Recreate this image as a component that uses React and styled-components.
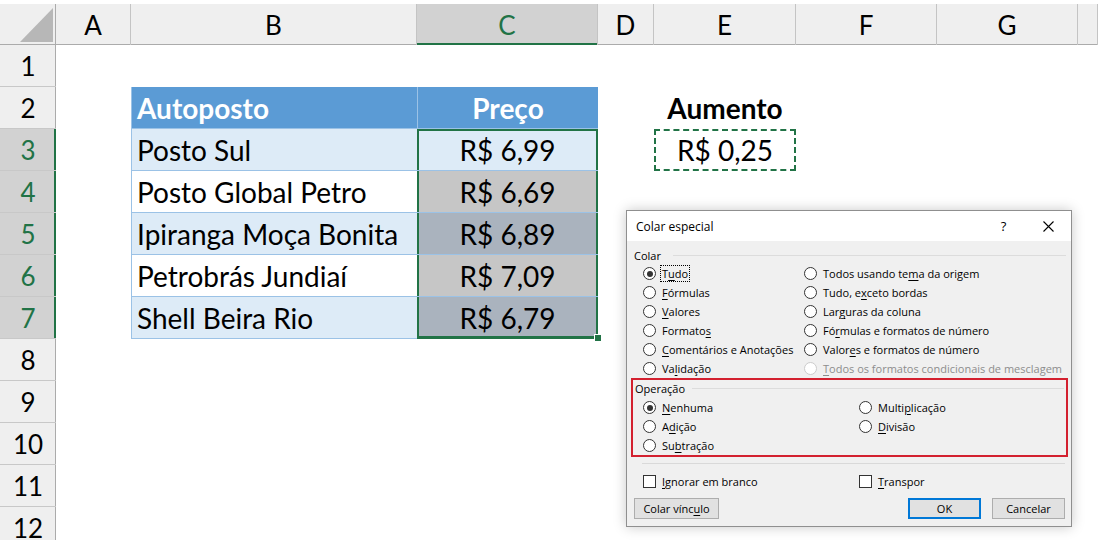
import React from "react";
import styled, { createGlobalStyle, css } from "styled-components";

const GREEN = "#217346";
const BAND = "#ddebf7";
const TABLE_LINE = "#9bc2e6";

const GlobalStyle = createGlobalStyle`
  html, body {
    margin: 0;
    padding: 0;
    background: #fff;
    overflow: hidden;
  }
  body {
    font-family: "Lato", "Liberation Sans", sans-serif;
  }
`;

const Screen = styled.div`
  position: relative;
  width: 1098px;
  height: 540px;
  overflow: hidden;
  background: #fff;
`;

const Sheet = styled.div`
  display: grid;
  grid-template-columns: 56px 75px 286px 181px 56px 142px 141px 141px 1fr;
  grid-template-rows: 41px;
  grid-auto-rows: 42px;
  padding-top: 4px;
  font-family: "Lato", "Liberation Sans", sans-serif;
  color: #000;
`;

const Corner = styled.div`
  position: relative;
  background: #efefef;
  box-shadow: inset -1px -1px 0 #ababab;
  &::after {
    content: "";
    position: absolute;
    right: 3px;
    bottom: 3px;
    width: 33px;
    height: 34px;
    background: #b7b7b7;
    clip-path: polygon(100% 0, 100% 100%, 0 100%);
  }
`;

const ColHead = styled.div`
  display: flex;
  align-items: center;
  justify-content: center;
  box-sizing: border-box;
  font-size: 26px;
  background: ${({ $selected }) => ($selected ? "#d2d2d2" : "#efefef")};
  color: ${({ $selected }) => ($selected ? GREEN : "#000")};
  border-right: 1px solid #c4c4c4;
  box-shadow: ${({ $selected }) =>
    $selected ? `inset 0 -2px 0 ${GREEN}` : "inset 0 -1px 0 #ababab"};
`;

const RowHead = styled.div`
  display: flex;
  align-items: center;
  justify-content: center;
  box-sizing: border-box;
  font-size: 26px;
  background: ${({ $selected }) => ($selected ? "#d2d2d2" : "#efefef")};
  color: ${({ $selected }) => ($selected ? GREEN : "#000")};
  border-bottom: 1px solid #c8c8c8;
  box-shadow: ${({ $selected }) =>
    $selected ? `inset -2px 0 0 ${GREEN}` : "inset -1px 0 0 #ababab"};
`;

const Blank = styled.div``;

const TableHead = styled.div`
  display: flex;
  align-items: center;
  justify-content: ${({ $center }) => ($center ? "center" : "flex-start")};
  box-sizing: border-box;
  padding-left: ${({ $center }) => ($center ? "0" : "5px")};
  background: #5b9bd5;
  color: #fff;
  font-weight: 700;
  font-size: 28px;
  border-left: 1px solid ${TABLE_LINE};
  border-bottom: 1px solid ${TABLE_LINE};
`;

const NameCell = styled.div`
  display: flex;
  align-items: center;
  box-sizing: border-box;
  padding-left: 5px;
  font-size: 28px;
  background: ${({ $band }) => ($band ? BAND : "#fff")};
  border-left: 1px solid ${TABLE_LINE};
  border-bottom: 1px solid ${TABLE_LINE};
  white-space: nowrap;
`;

const shades = {
  active: BAND,
  gray: "#c6c6c6",
  blue: "#aab3be",
};

const PriceCell = styled.div`
  position: relative;
  display: flex;
  align-items: center;
  justify-content: center;
  box-sizing: border-box;
  font-size: 28px;
  background: ${({ $shade }) => shades[$shade]};
  border-bottom: 1px solid ${TABLE_LINE};
  box-shadow: inset 2px 0 0 ${GREEN}, inset -2px 0 0 ${GREEN}
    ${({ $top }) => ($top ? `, inset 0 2px 0 ${GREEN}` : "")}
    ${({ $bottom }) => ($bottom ? `, inset 0 -2px 0 ${GREEN}` : "")};
  ${({ $bottom }) =>
    $bottom &&
    css`
      border-bottom-color: ${GREEN};
    `}
`;

const FillHandle = styled.span`
  position: absolute;
  right: -4px;
  bottom: -4px;
  width: 6px;
  height: 6px;
  background: ${GREEN};
  border: 1px solid #fff;
  z-index: 2;
`;

const LabelCell = styled.div`
  display: flex;
  align-items: center;
  justify-content: center;
  font-size: 28px;
  font-weight: 700;
`;

const CopiedCell = styled.div`
  display: flex;
  align-items: center;
  justify-content: center;
  box-sizing: border-box;
  font-size: 28px;
  border: 2px dashed ${GREEN};
`;

/* ---------- dialog ---------- */

const Dialog = styled.div`
  position: absolute;
  left: 626px;
  top: 210px;
  width: 446px;
  height: 317px;
  box-sizing: border-box;
  display: flex;
  flex-direction: column;
  background: #f0f0f0;
  border: 1px solid #8f8f8f;
  box-shadow: 0 0 12px rgba(0, 0, 0, 0.22);
  font-family: "Open Sans", "Noto Sans", sans-serif;
  font-size: 11px;
  color: #000;
`;

const TitleBar = styled.div`
  display: flex;
  align-items: center;
  height: 30px;
  padding-left: 9px;
  background: #fff;
  font-size: 12px;
`;

const TitleText = styled.span`
  flex: 1;
`;

const TitleButton = styled.span`
  width: 45px;
  height: 30px;
  display: flex;
  align-items: center;
  justify-content: center;
  font-size: 13px;
`;

const Body = styled.div`
  padding: 7px 3px 0 4px;
`;

const Legend = styled.div`
  display: flex;
  align-items: center;
  height: 14px;
  padding-left: ${({ $indent }) => $indent}px;
  margin-right: 2px;
  &::after {
    content: "";
    flex: 1;
    height: 1px;
    margin-left: ${({ $gap }) => $gap}px;
    background: #dcdcdc;
  }
`;

const OptionGrid = styled.div`
  display: grid;
  grid-template-columns: ${({ $col }) => $col}px 1fr;
  grid-auto-rows: 19px;
  padding-left: ${({ $indent }) => $indent}px;
  margin-top: ${({ $top }) => $top}px;
`;

const Option = styled.div`
  display: flex;
  align-items: center;
  gap: 6px;
  white-space: nowrap;
  color: ${({ $disabled }) => ($disabled ? "#8d8d8d" : "#000")};
`;

const Radio = styled.span`
  width: 13px;
  height: 13px;
  box-sizing: border-box;
  flex: none;
  display: flex;
  align-items: center;
  justify-content: center;
  border-radius: 50%;
  background: #fff;
  border: 1px solid ${({ $disabled }) => ($disabled ? "#cccccc" : "#333")};
  &::after {
    content: "";
    width: 6px;
    height: 6px;
    border-radius: 50%;
    background: ${({ $checked }) => ($checked ? "#333" : "transparent")};
  }
`;

const Checkbox = styled.span`
  width: 13px;
  height: 13px;
  box-sizing: border-box;
  flex: none;
  background: #fff;
  border: 1px solid #333;
`;

const Focus = styled.span`
  outline: 1px dotted #000;
  outline-offset: 0;
  padding: 0 1px;
  margin-left: -1px;
`;

const Key = styled.u`
  text-decoration: underline;
  text-underline-offset: 2px;
`;

const OperationBox = styled.div`
  border: 2px solid #d3202f;
  padding-top: 1px;
`;

const Separator = styled.div`
  height: 1px;
  margin: 6px 3px 0 11px;
  background: #d9d9d9;
`;

const ButtonRow = styled.div`
  display: flex;
  gap: 11px;
  height: 21px;
  margin-top: 7px;
  padding: 0 3px;
`;

const Button = styled.button`
  width: ${({ $w }) => $w}px;
  height: 21px;
  box-sizing: border-box;
  padding: 0;
  font: inherit;
  color: #000;
  background: #e1e1e1;
  border: ${({ $primary }) => ($primary ? "2px solid #0078d7" : "1px solid #adadad")};
  ${({ $push }) =>
    $push &&
    css`
      margin-left: auto;
    `}
`;

const Spacer = styled.span``;

const mnemonic = (text, k) =>
  k < 0 ? (
    text
  ) : (
    <>
      {text.slice(0, k)}
      <Key>{text[k]}</Key>
      {text.slice(k + 1)}
    </>
  );

const pasteOptions = [
  { text: "Tudo", k: 1, checked: true, focus: true },
  { text: "Todos usando tema da origem", k: 15 },
  { text: "Fórmulas", k: 0 },
  { text: "Tudo, exceto bordas", k: 7 },
  { text: "Valores", k: 0 },
  { text: "Larguras da coluna", k: 3 },
  { text: "Formatos", k: 7 },
  { text: "Fórmulas e formatos de número", k: 2 },
  { text: "Comentários e Anotações", k: 0 },
  { text: "Valores e formatos de número", k: 5 },
  { text: "Validação", k: 2 },
  { text: "Todos os formatos condicionais de mesclagem", k: 0, disabled: true },
];

const operationOptions = [
  { text: "Nenhuma", k: 0, checked: true },
  { text: "Multiplicação", k: 5 },
  { text: "Adição", k: 1 },
  { text: "Divisão", k: 0 },
  { text: "Subtração", k: 2 },
  null,
];

const RadioOption = ({ text, k, checked, disabled, focus }) => {
  const label = mnemonic(text, k);
  return (
    <Option $disabled={disabled}>
      <Radio $checked={checked} $disabled={disabled} />
      {focus ? <Focus>{label}</Focus> : <span>{label}</span>}
    </Option>
  );
};

const PasteSpecial = () => (
  <Dialog>
    <TitleBar>
      <TitleText>Colar especial</TitleText>
      <TitleButton>?</TitleButton>
      <TitleButton>
        <svg width="11" height="11" viewBox="0 0 11 11">
          <path d="M0.5 0.5 L10.5 10.5 M10.5 0.5 L0.5 10.5" stroke="#000" strokeWidth="1.1" />
        </svg>
      </TitleButton>
    </TitleBar>
    <Body>
      <Legend $indent={3} $gap={12}>Colar</Legend>
      <OptionGrid $col={161} $indent={12} $top={2}>
        {pasteOptions.map((o) => (
          <RadioOption key={o.text} {...o} />
        ))}
      </OptionGrid>
      <OperationBox>
        <Legend $indent={2} $gap={7}>Operação</Legend>
        <OptionGrid $col={216} $indent={10} $top={3}>
          {operationOptions.map((o, i) =>
            o ? <RadioOption key={o.text} {...o} /> : <Spacer key={i} />
          )}
        </OptionGrid>
      </OperationBox>
      <Separator />
      <OptionGrid $col={216} $indent={12} $top={8}>
        <Option>
          <Checkbox />
          <span>{mnemonic("Ignorar em branco", 0)}</span>
        </Option>
        <Option>
          <Checkbox />
          <span>{mnemonic("Transpor", 0)}</span>
        </Option>
      </OptionGrid>
      <ButtonRow>
        <Button $w={85}>{mnemonic("Colar vínculo", 10)}</Button>
        <Button $w={73} $primary $push>
          OK
        </Button>
        <Button $w={73}>Cancelar</Button>
      </ButtonRow>
    </Body>
  </Dialog>
);

const columns = ["A", "B", "C", "D", "E", "F", "G", ""];

const stations = [
  { name: "Posto Sul", price: "R$ 6,99", shade: "active" },
  { name: "Posto Global Petro", price: "R$ 6,69", shade: "gray" },
  { name: "Ipiranga Moça Bonita", price: "R$ 6,89", shade: "blue" },
  { name: "Petrobrás Jundiaí", price: "R$ 7,09", shade: "gray" },
  { name: "Shell Beira Rio", price: "R$ 6,79", shade: "blue" },
];

const blanks = (n, key) =>
  Array.from({ length: n }, (_, i) => <Blank key={`${key}-${i}`} />);

const renderRow = (r) => {
  const selected = r >= 3 && r <= 7;
  const head = (
    <RowHead key={`h${r}`} $selected={selected}>
      {r}
    </RowHead>
  );

  if (r === 2) {
    return [
      head,
      <Blank key="2a" />,
      <TableHead key="2b">Autoposto</TableHead>,
      <TableHead key="2c" $center>
        Preço
      </TableHead>,
      <Blank key="2d" />,
      <LabelCell key="2e">Aumento</LabelCell>,
      ...blanks(3, "2r"),
    ];
  }

  if (selected) {
    const i = r - 3;
    const s = stations[i];
    const last = i === stations.length - 1;
    return [
      head,
      <Blank key={`${r}a`} />,
      <NameCell key={`${r}b`} $band={i % 2 === 0}>
        {s.name}
      </NameCell>,
      <PriceCell key={`${r}c`} $shade={s.shade} $top={i === 0} $bottom={last}>
        {s.price}
        {last && <FillHandle />}
      </PriceCell>,
      <Blank key={`${r}d`} />,
      r === 3 ? <CopiedCell key="3e">R$ 0,25</CopiedCell> : <Blank key={`${r}e`} />,
      ...blanks(3, `${r}r`),
    ];
  }

  return [head, ...blanks(8, `${r}`)];
};

const App = () => (
  <>
    <GlobalStyle />
    <Screen>
      <Sheet>
        <Corner />
        {columns.map((c, i) => (
          <ColHead key={`c${i}`} $selected={c === "C"}>
            {c}
          </ColHead>
        ))}
        {Array.from({ length: 12 }, (_, i) => renderRow(i + 1))}
      </Sheet>
      <PasteSpecial />
    </Screen>
  </>
);

export default App;
